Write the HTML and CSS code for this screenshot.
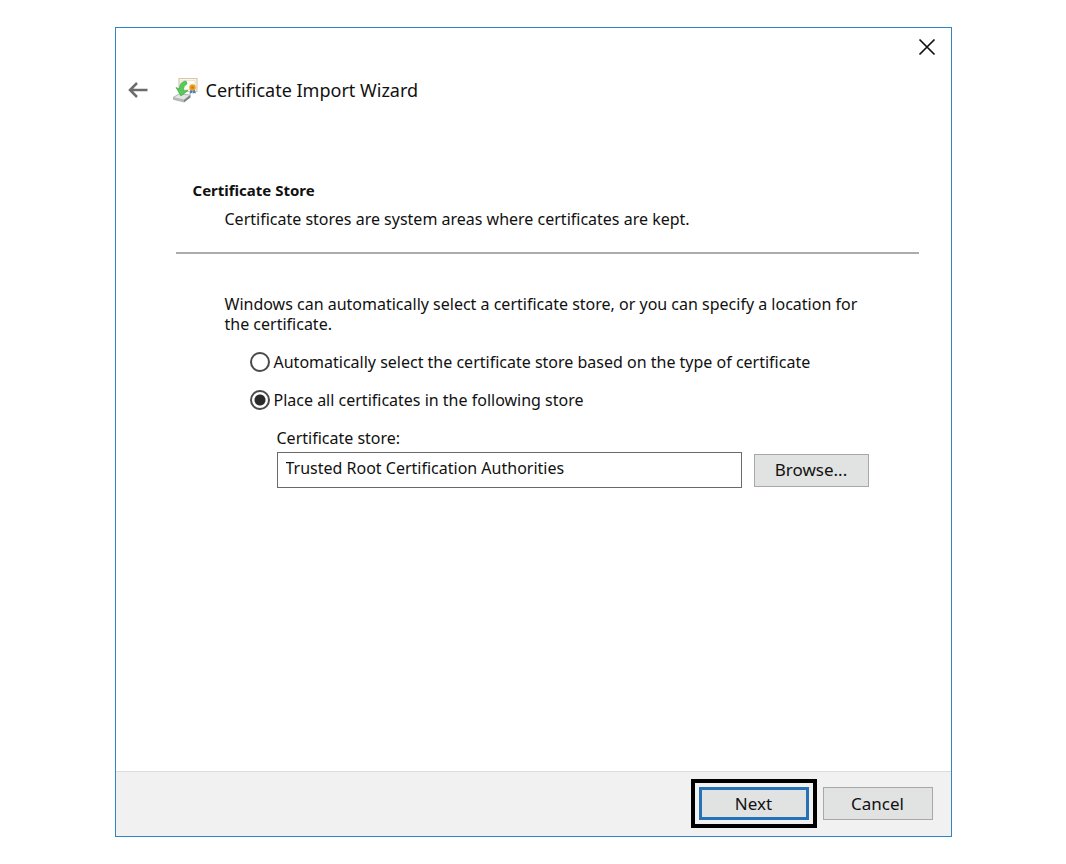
FILE: index.html
```
<!doctype html>
<html lang="en">
<head>
    <meta charset="utf-8">
    <title>Certificate Import Wizard</title>
    <link rel="stylesheet" href="styles.css">
</head>
<body>
<form class="wizard">
    <div class="titlebar">
        <button type="button" class="close" aria-label="Close">
            <svg width="18" height="18" viewBox="0 0 18 18"><path d="M1.500 1.500l15 15M16.500 1.500l-15 15" stroke="#111" stroke-width="1.700" fill="none"/></svg>
        </button>
    </div>
    <header class="head">
        <button type="button" class="back" aria-label="Back">
            <svg width="20" height="18" viewBox="0 0 20 18"><path d="M19.500 9H2M9 2L2 9l7 7" stroke="#6b6b6b" stroke-width="2.500" fill="none"/></svg>
        </button>
        <svg class="logo" width="26" height="26" viewBox="0 0 26 26">
            <path d="M7 1.500h18v13H7z" fill="#fbf6ea" stroke="#d6c6ae" stroke-width="1.200"/>
            <path d="M9 3.500h14v9H9z" fill="#fdfcf8" stroke="#eadfca" stroke-width=".8"/>
            <path d="M18.500 12l-1 5 2-1 1 .5v-4.500zM22.500 12l1.500 4.500-2-.5-1 .5v-4.500z" fill="#4a7fc0"/>
            <circle cx="20.500" cy="10.500" r="3.200" fill="#e9a21b"/>
            <circle cx="20.500" cy="10.500" r="1.300" fill="#c97a10"/>
            <path d="M1 20.500l6-3.500 11.500 1L12 23z" fill="#e4e6e6" stroke="#a2a7a7" stroke-width=".8"/>
            <path d="M1 20.500L12 23v2.500L1 22.800z" fill="#b4b8b8"/>
            <path d="M12 23l6.500-5v2.500l-6.500 5z" fill="#7c8282"/>
            <path d="M14 4C10 4.500 7.500 7 7.500 12L4 10.500l5 8.500 7-5.500-4.500.2C11.500 10 12.500 8 15 7z" fill="#58cb58" stroke="#2fa23b" stroke-width=".6"/>
        </svg>
        <h1>Certificate Import Wizard</h1>
    </header>
    <main class="page">
        <section class="intro">
            <h2>Certificate Store</h2>
            <p>Certificate stores are system areas where certificates are kept.</p>
        </section>
        <section class="options">
            <p>Windows can automatically select a certificate store, or you can specify a location for the certificate.</p>
            <label class="choice"><input type="radio" name="store-mode" value="auto">Automatically select the certificate store based on the type of certificate</label>
            <label class="choice"><input type="radio" name="store-mode" value="manual" checked>Place all certificates in the following store</label>
            <div class="store">
                <label for="store">Certificate store:</label>
                <div class="store-row">
                    <input type="text" id="store" value="Trusted Root Certification Authorities">
                    <button type="button" class="btn">Browse...</button>
                </div>
            </div>
        </section>
    </main>
    <footer class="actions">
        <span class="marked"><button type="submit" class="btn primary">Next</button></span>
        <button type="button" class="btn">Cancel</button>
    </footer>
</form>
</body>
</html>
```
FILE: styles.css
```
* { box-sizing: border-box; }
body {
    margin: 0;
    padding: 27px 20px;
    background: #fff;
    color: #111;
    font: 16px/20px "Noto Sans", sans-serif;
}
h1, h2, p { margin: 0; }
button, input { font: inherit; color: inherit; }

.wizard {
    display: flex;
    flex-direction: column;
    max-width: 837px;
    min-height: calc(100vh - 54px);
    margin: 0 auto;
    border: 1px solid #2f86c2;
}

.titlebar { display: flex; justify-content: flex-end; padding: 10px 15px 0; }
.close, .back { display: flex; padding: 0; border: 0; background: none; }

.head { display: flex; align-items: center; padding: 20px 12px 0; }
.head h1 { margin-left: 8px; font-size: 18px; font-weight: 400; line-height: 28px; }
.logo { margin-left: 24px; }

.page { flex: 1; padding: 76px 32px 0 60px; }
.intro { padding: 0 17px 23px; border-bottom: 2px solid #a9adad; }
.intro h2 { font-size: 15px; line-height: 20px; }
.intro p { margin: 9px 0 0 32px; }

.options { padding: 40px 50px 40px 49px; }
.choice { display: flex; align-items: center; gap: 4px; margin: 18px 0 0 25px; }
.choice input {
    appearance: none;
    width: 20px;
    height: 20px;
    margin: 0;
    border: 2px solid #4a4a4a;
    border-radius: 50%;
    background: #fff;
}
.choice input:checked { background: radial-gradient(circle, #2b2b2b 5px, #fff 6px); }

.store { margin: 18px 0 0 52px; }
.store label { display: block; }
.store-row { display: flex; align-items: center; gap: 12px; margin-top: 4px; }
.store-row input {
    flex: 1;
    min-width: 0;
    height: 36px;
    padding: 0 8px 4px;
    border: 1px solid #6a6a6a;
    background: #fff;
}

.btn {
    width: 110px;
    height: 33px;
    padding: 0;
    border: 1px solid #a8a8a8;
    background: #e1e2e2;
    font-size: 17px;
}
.store-row .btn { width: 115px; }
.primary { border: 3px solid #2672b8; }

.actions {
    display: flex;
    justify-content: flex-end;
    align-items: center;
    gap: 6px;
    padding: 7px 18px 8px;
    border-top: 1px solid #dcdcdc;
    background: #f1f1f1;
}
.marked { display: flex; padding: 4px; border: 4px solid #000; }
```
